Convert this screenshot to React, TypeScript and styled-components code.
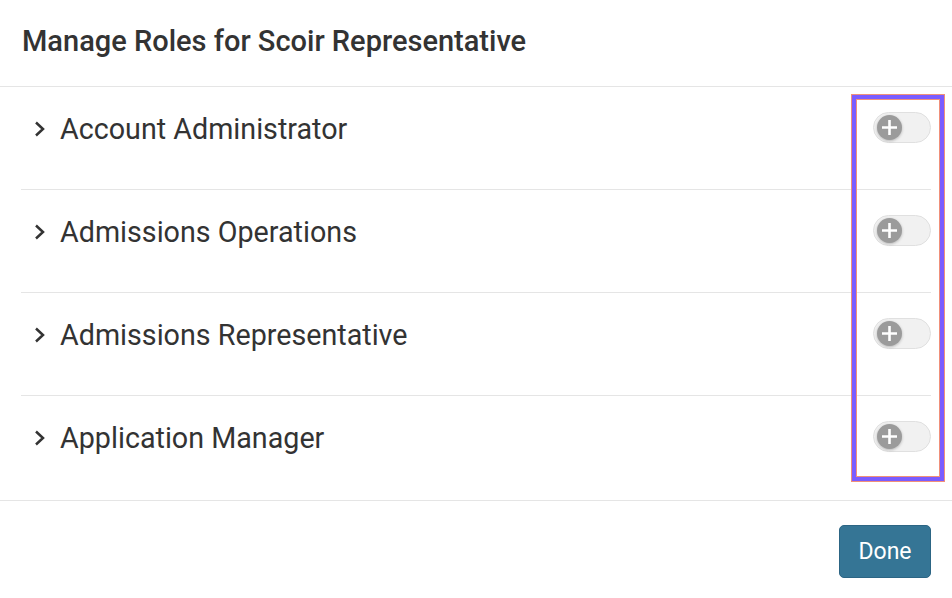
import styled, { createGlobalStyle } from "styled-components";

const GlobalStyle = createGlobalStyle`
    html, body {
        margin: 0;
        padding: 0;
        background: #fff;
        font-family: Roboto, "Liberation Sans", sans-serif;
        color: #333;
    }
`;

const Modal = styled.div`
    position: relative;
    width: 952px;
    height: 598px;
    display: flex;
    flex-direction: column;
    background: #fff;
`;

const Header = styled.div`
    height: 87px;
    box-sizing: border-box;
    padding: 23px 22px 0;
    border-bottom: 1px solid #e5e5e5;
`;

const Title = styled.h2`
    margin: 0;
    font-size: 29px;
    font-weight: 500;
    line-height: 36px;
    color: #333;
`;

const List = styled.div`
    padding: 0 21px;
    height: 413px;
    box-sizing: border-box;
    display: flex;
    flex-direction: column;
`;

const Row = styled.div<{ $last?: boolean }>`
    height: 103px;
    flex-shrink: 0;
    box-sizing: border-box;
    padding-top: 24px;
    border-bottom: ${(p) => (p.$last ? "none" : "1px solid #e5e5e5")};
    display: flex;
    align-items: flex-start;
    justify-content: space-between;
`;

const RowHead = styled.div`
    display: flex;
    align-items: center;
    height: 36px;
`;

const Chevron = styled.span`
    display: inline-flex;
    width: 39px;
    padding-left: 12px;
    box-sizing: border-box;
`;

const RoleName = styled.span`
    font-size: 28.7px;
    line-height: 36px;
    color: #333;
`;

const Toggle = styled.div`
    width: 58px;
    height: 31px;
    box-sizing: border-box;
    margin-top: 1px;
    border-radius: 16px;
    background: #f1f1f1;
    border: 1px solid #e0e0e0;
    display: flex;
    align-items: center;
    padding-left: 3px;
`;

const Knob = styled.span`
    width: 25px;
    height: 25px;
    border-radius: 50%;
    background: #9b9b9b;
    box-shadow: 0 1px 3px rgba(0, 0, 0, 0.25);
    display: flex;
    align-items: center;
    justify-content: center;
`;

const Footer = styled.div`
    flex: 1;
    border-top: 1px solid #e5e5e5;
    display: flex;
    justify-content: flex-end;
    align-items: flex-start;
    padding: 24px 21px 0;
`;

const DoneButton = styled.button`
    width: 92px;
    height: 53px;
    border: 1px solid #2c6584;
    border-radius: 5px;
    background: #357595;
    color: #fff;
    font-family: Roboto, "Liberation Sans", sans-serif;
    font-size: 23px;
    cursor: pointer;
`;

const Highlight = styled.div`
    position: absolute;
    left: 851px;
    top: 94px;
    width: 94px;
    height: 388px;
    box-sizing: border-box;
    border: 1px solid #f0907a;
    pointer-events: none;

    &::after {
        content: "";
        position: absolute;
        inset: 0;
        border: 4px solid #7a5cff;
        box-shadow: inset 0 0 0 1px #f0907a;
    }
`;

const roles = [
    "Account Administrator",
    "Admissions Operations",
    "Admissions Representative",
    "Application Manager",
];

const ChevronIcon = () => (
    <svg width="14" height="18" viewBox="0 0 14 18">
        <path d="M3 2.5 L10 9 L3 15.5" fill="none" stroke="#333" strokeWidth="2.5" />
    </svg>
);

const PlusIcon = () => (
    <svg width="17" height="17" viewBox="0 0 17 17">
        <path d="M8.5 1 V16 M1 8.5 H16" stroke="#fff" strokeWidth="2.6" />
    </svg>
);

const App = () => {
    return (
        <Modal>
            <GlobalStyle />
            <Header>
                <Title>Manage Roles for Scoir Representative</Title>
            </Header>
            <List>
                {roles.map((role, i) => (
                    <Row key={role} $last={i === roles.length - 1}>
                        <RowHead>
                            <Chevron>
                                <ChevronIcon />
                            </Chevron>
                            <RoleName>{role}</RoleName>
                        </RowHead>
                        <Toggle>
                            <Knob>
                                <PlusIcon />
                            </Knob>
                        </Toggle>
                    </Row>
                ))}
            </List>
            <Footer>
                <DoneButton>Done</DoneButton>
            </Footer>
            <Highlight />
        </Modal>
    );
};
export default App;
